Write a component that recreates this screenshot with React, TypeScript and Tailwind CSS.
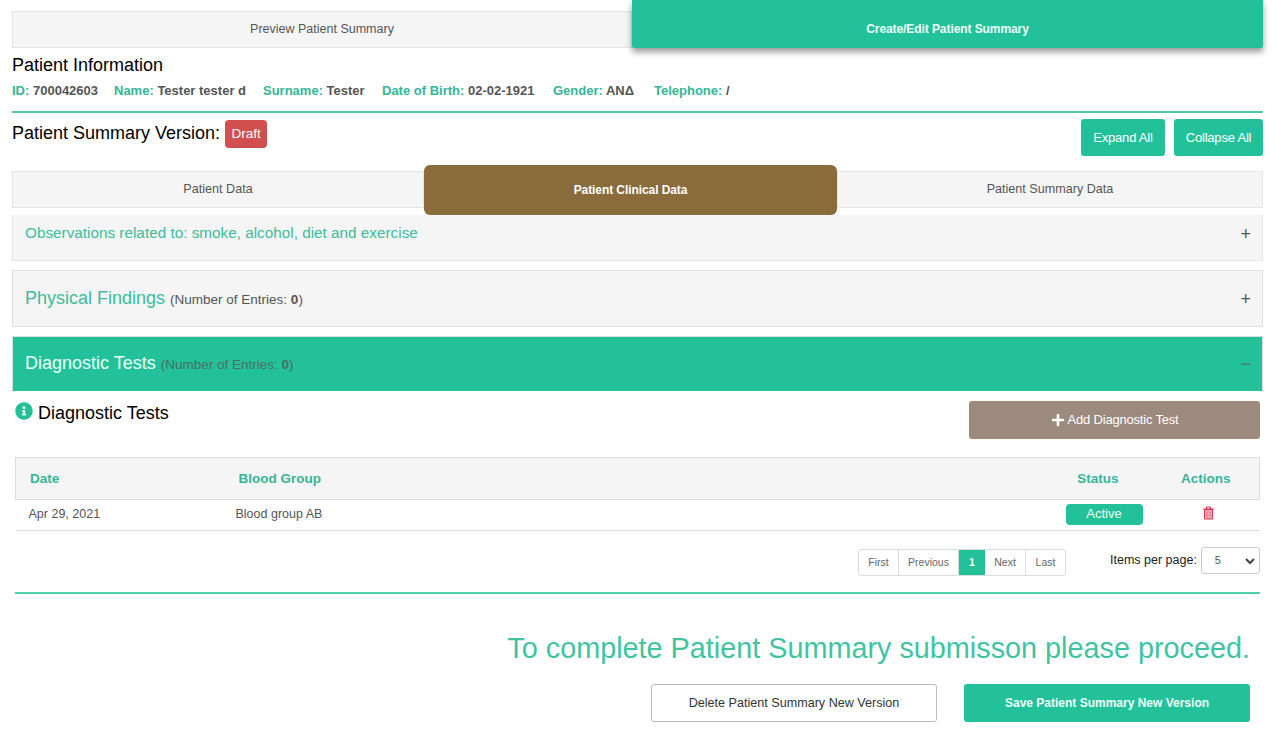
import { FaInfoCircle, FaPlus } from "react-icons/fa";

function Info({ label, value, className = "" }: { label: string; value: string; className?: string }) {
  return (
    <span className={"font-bold " + className}>
      <span className="text-[#35b697]">{label}</span> <span className="text-[#555]">{value}</span>
    </span>
  );
}

function Tab({ children, className = "" }: { children: React.ReactNode; className?: string }) {
  return (
    <div className={"flex items-center justify-center " + className}>{children}</div>
  );
}

function AccordionHead({ title, small, sign, className, titleClass, noteClass, signClass }: { title: string; small?: boolean; sign: string; className: string; titleClass: string; noteClass?: string; signClass?: string }) {
  return (
    <div className={"flex items-center justify-between border pl-3 pr-[11px] " + className}>
      <div className="flex items-baseline">
        <span className={titleClass}>{title}</span>
        {small ? (
          <span className={"ml-[5px] text-[13.5px] " + (noteClass ?? "text-[#555]")}>
            (Number of Entries: <b>0</b>)
          </span>
        ) : null}
      </div>
      <span className={"text-[18px] leading-none " + (signClass ?? "text-[#555]")}>{sign}</span>
    </div>
  );
}

function PageLink({ children, className = "" }: { children: React.ReactNode; className?: string }) {
  return (
    <div className={"flex h-full items-center justify-center border-r border-[#ddd] text-[10.5px] text-[#666] last:border-r-0 " + className}>{children}</div>
  );
}

export default function App() {
  return (
    <div className="h-[734px] w-[1276px] overflow-hidden bg-white font-['Liberation_Sans',Arial,sans-serif] text-[#333]">
      <div className="pl-3 pr-[13px]">
        <div className="flex items-end">
          <Tab className="h-[37px] w-[620px] border border-[#e4e4e4] bg-[#f5f5f5] pb-[1px] text-[12.5px] text-[#555]">Preview Patient Summary</Tab>
          <Tab className="relative z-10 h-[48px] w-[631px] rounded-b-[2px] bg-[#22c19a] pt-[9px] text-[12px] font-bold tracking-[-0.08px] text-[#f0fff9] shadow-[0_4px_6px_rgba(0,0,0,0.4)]">Create/Edit Patient Summary</Tab>
        </div>

        <h1 className="mt-[7px] text-[18px] leading-[20px] text-black">Patient Information</h1>
        <div className="mt-[7px] flex h-[17px] items-center text-[13px] leading-[17px]">
          <Info label="ID:" value="700042603" className="w-[102px]" />
          <Info label="Name:" value="Tester tester d" className="w-[149px]" />
          <Info label="Surname:" value="Tester" className="w-[119px]" />
          <Info label="Date of Birth:" value="02-02-1921" className="w-[171px]" />
          <Info label="Gender:" value="ANΔ" className="w-[101px]" />
          <Info label="Telephone:" value="/" />
        </div>
        <div className="mt-[12px] h-[2px] bg-[#4fc4a8]" />

        <div className="mt-[6px] flex h-[37px] items-start justify-between">
          <div className="flex items-center pt-px">
            <span className="mt-[-2px] text-[18px] leading-[26px] text-black">Patient Summary Version:</span>
            <span className="ml-[5px] flex h-[28px] w-[42px] items-center justify-center rounded-[4px] bg-[#d05050] text-[13.5px] text-white">Draft</span>
          </div>
          <div className="flex gap-[9px]">
            <button className="h-[37px] w-[84px] rounded-[3px] bg-[#22c19a] text-[13px] tracking-[-0.2px] text-white">Expand All</button>
            <button className="h-[37px] w-[89px] rounded-[3px] bg-[#22c19a] text-[13px] tracking-[-0.2px] text-white">Collapse All</button>
          </div>
        </div>

        <div className="mt-[9px] flex h-[50px] items-start">
          <Tab className="mt-[6px] h-[37px] w-[412px] border border-[#e4e4e4] bg-[#f5f5f5] text-[12.6px] text-[#555]">Patient Data</Tab>
          <Tab className="relative z-10 h-[50px] w-[413px] rounded-[6px] bg-[#8a6b3b] text-[12px] font-bold tracking-[-0.08px] text-white">Patient Clinical Data</Tab>
          <Tab className="mt-[6px] h-[37px] w-[426px] border border-[#e4e4e4] bg-[#f5f5f5] text-[12.6px] text-[#555]">Patient Summary Data</Tab>
        </div>

        <AccordionHead title="Observations related to: smoke, alcohol, diet and exercise" sign="+" className="h-[46px] border-[#e4e4e4] border-t-0 bg-[#f5f5f5] pb-[8px]" titleClass="text-[15.3px] text-[#3dbb9c]" />
        <AccordionHead title="Physical Findings" small sign="+" className="mt-[9px] h-[57px] border-[#e0e0e0] bg-[#f5f5f5]" titleClass="text-[18px] text-[#3dbb9c]" />
        <AccordionHead title="Diagnostic Tests" small sign="−" className="mt-[9px] h-[55px] border-[#dcdcdc] border-b-[#22c19a] bg-[#22c19a]" titleClass="text-[18px] text-[#e9fff8]" noteClass="text-[#4b6f66]" signClass="text-[#4b7f72]" />
      </div>

      <div className="pl-[15px] pr-[16px]">
        <div className="mt-[10px] flex h-[38px] items-start justify-between">
          <div className="flex items-center">
            <FaInfoCircle className="mt-[-4px] text-[18px] text-[#22c19a]" />
            <span className="ml-[5px] text-[18px] leading-[24px] text-black">Diagnostic Tests</span>
          </div>
          <button className="flex h-[38px] w-[291px] items-center justify-center rounded-[3px] bg-[#9c8a7e] text-[13px] tracking-[-0.2px] text-white">
            <FaPlus className="mr-[3px] text-[14px]" />
            Add Diagnostic Test
          </button>
        </div>

        <table className="mt-[18px] w-[1245px] table-fixed border-collapse text-[12.5px]">
          <thead>
            <tr className="h-[42px] border border-[#ddd] bg-[#f5f5f5] text-[13.5px] font-bold text-[#35b697]">
              <th className="w-[212px] pl-[14px] pt-[1px] text-left">Date</th>
              <th className="pl-[11px] pt-[1px] text-left">Blood Group</th>
              <th className="w-[120px] pl-[1px] pt-[1px] text-center">Status</th>
              <th className="w-[102px] pr-[5px] pt-[1px] text-center">Actions</th>
            </tr>
          </thead>
          <tbody>
            <tr className="h-[31px] border-b border-[#ddd] text-[#555]">
              <td className="pb-[2px] pl-[13px]">Apr 29, 2021</td>
              <td className="pb-[2px] pl-[8px]">Blood group AB</td>
              <td className="pb-[1px] pl-[13px] text-center align-middle">
                <span className="inline-flex h-[21px] w-[77px] items-center justify-center rounded-[4px] bg-[#22c19a] pb-[3px] text-[13px] leading-none text-[#f0fff9]">Active</span>
              </td>
              <td className="pb-[5px] pl-[45px]">
                <svg width="11" height="14" viewBox="0 0 11 14" fill="none" className="block" aria-hidden="true">
                  <path d="M1.5 3.5h8V13h-8z" fill="#f2a9b2" stroke="#d9324f" />
                  <path d="M0 3h11M3.5 3V1h4v2" stroke="#d9324f" />
                  <path d="M4 5.5V11M7 5.5V11" stroke="#d9324f" strokeOpacity="0.5" />
                </svg>
              </td>
            </tr>
          </tbody>
        </table>

        <div className="mt-[18px] flex h-[27px] items-start">
          <div className="ml-[843px] flex h-[27px] w-[208px] items-center overflow-hidden rounded-[3px] border border-[#ddd]">
            <PageLink className="w-[40px]">First</PageLink>
            <PageLink className="w-[60px]">Previous</PageLink>
            <PageLink className="w-[26px] border-r-0 bg-[#22c19a] font-bold text-white">1</PageLink>
            <PageLink className="w-[41px]">Next</PageLink>
            <PageLink className="flex-1">Last</PageLink>
          </div>
          <div className="ml-[44px] mt-[-2px] flex items-center">
            <span className="mt-[-1px] whitespace-nowrap text-[12.5px] text-[#222]">Items per page:</span>
            <div className="ml-[4px] flex h-[27px] w-[59px] items-center justify-between rounded-[3px] border border-[#ccc] pl-[13px] pr-[3px] text-[11px] text-[#555]">
              <span>5</span>
              <svg width="12" height="8" viewBox="0 0 12 8" fill="none" stroke="#444" strokeWidth="2"><path d="M2 2l4 4 4-4" /></svg>
            </div>
          </div>
        </div>

        <div className="mt-[16px] h-[2px] bg-[#4fd0b0]" />

        <p className="mt-[36px] pr-[10px] text-right text-[28.8px] leading-[36px] text-[#3fc4a3]">To complete Patient Summary submisson please proceed.</p>

        <div className="mt-[18px] flex justify-end gap-[27px] pr-[10px]">
          <button className="h-[38px] w-[286px] rounded-[3px] border border-[#bbb] bg-white pt-[1px] text-[12.6px] text-[#333]">Delete Patient Summary New Version</button>
          <button className="h-[38px] w-[286px] rounded-[3px] bg-[#22c19a] text-[12px] font-bold text-[#f0fff9]">Save Patient Summary New Version</button>
        </div>
      </div>
    </div>
  );
}
